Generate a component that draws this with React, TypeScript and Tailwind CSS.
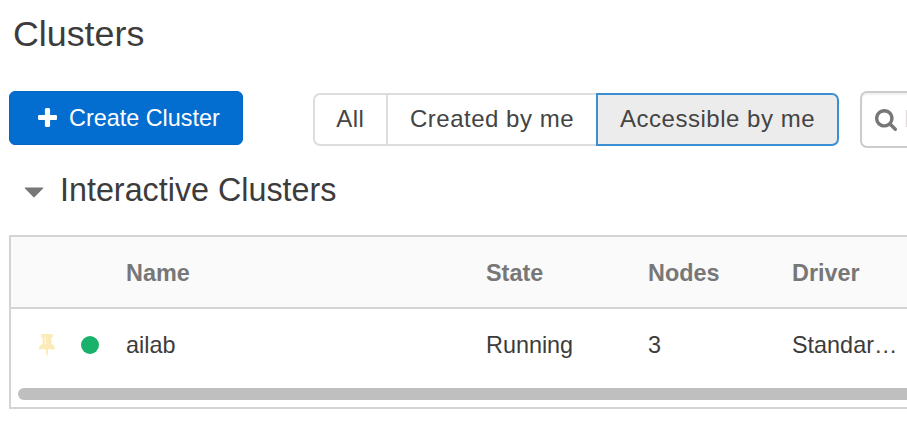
const plusPath =
  'M1600 736v192q0 40-28 68t-68 28h-416v416q0 40-28 68t-68 28h-192q-40 0-68-28t-28-68v-416h-416q-40 0-68-28t-28-68v-192q0-40 28-68t68-28h416v-416q0-40 28-68t68-28h192q40 0 68 28t28 68v416h416q40 0 68 28t28 68z';
const searchPath =
  'M1216 832q0-185-131.500-316.500t-316.500-131.500-316.500 131.500-131.500 316.500 131.500 316.500 316.500 131.500 316.500-131.500 131.500-316.500zm512 832q0 52-38 90t-90 38q-54 0-90-38l-343-342q-179 124-399 124-143 0-273.500-55.500t-225-150-150-225-55.500-273.500 55.500-273.500 150-225 225-150 273.500-55.500 273.500 55.500 225 150 150 225 55.500 273.500q0 220-124 399l343 343q37 37 37 90z';
const pinPath =
  'M800 864v-448q0-14-9-23t-23-9-23 9-9 23v448q0 14 9 23t23 9 23-9 9-23zm672 352q0 26-19 45t-45 19h-429l-51 483q-2 12-10.500 20.500t-20.500 8.500h-1q-27 0-32-27l-76-485h-404q-26 0-45-19t-19-45q0-123 78.500-221.500t177.500-98.500v-512q-52 0-90-38t-38-90 38-90 90-38h640q52 0 90 38t38 90-38 90-90 38v512q99 0 177.500 98.500t78.500 221.500z';

const columns = 'grid grid-cols-[115px_360px_162px_144px_1fr] items-center';

function Toolbar() {
  return (
    <div className="flex h-[58px] w-[1100px] items-start">
      <button className="flex h-[54px] w-[234px] items-center rounded-[6px] border border-[#0565c2] bg-[#036dd0] pl-[28px] text-white">
        <svg className="mr-[12px] mb-[2px] h-[19px] w-[19px] shrink-0" viewBox="192 128 1408 1408" fill="currentColor">
          <path d={plusPath} />
        </svg>
        <span className="pt-px text-[23.4px] whitespace-nowrap">Create Cluster</span>
      </button>
      <div className="mt-[2px] ml-[69.500px] flex h-[53px] text-[24px] whitespace-nowrap text-[#444]">
        <button className="w-[73.500px] rounded-l-[7px] border-2 border-r-0 border-[#ddd] pb-px tracking-[0.4px]">All</button>
        <button className="w-[210px] border-2 border-r-0 border-[#ddd] pb-px tracking-[0.52px]">Created by me</button>
        <button className="w-[243px] rounded-r-[7px] border-2 border-[#3a8fd4] bg-[#ececec] pb-px tracking-[0.52px]">
          Accessible by me
        </button>
      </div>
      <div className="ml-[21px] flex h-[57px] w-[200px] items-center rounded-[7px] border-2 border-[#ccc] pl-[13px] shadow-[inset_0_2px_2px_rgba(0,0,0,0.06)]">
        <svg className="mr-[7px] h-[22px] w-[22px] shrink-0" viewBox="64 128 1664 1664" fill="#777">
          <path d={searchPath} />
        </svg>
        <span className="text-[23.4px] text-[#ddd]">Filter</span>
      </div>
    </div>
  );
}

function ClusterTable() {
  return (
    <div className="h-[174px] w-[1100px] border-2 border-[#d4d4d4] text-[23.4px]">
      <div className={`${columns} h-[72px] border-b-2 border-[#d4d4d4] bg-[#fafafa] pt-[3px] font-bold text-[#777]`}>
        <span />
        <span>Name</span>
        <span>State</span>
        <span>Nodes</span>
        <span>Driver</span>
      </div>
      <div className={`${columns} h-[72px] pt-[2px] text-[#3c3c3c]`}>
        <div className="flex items-center pb-[2px] pl-[28px]">
          <svg className="h-[22px] w-[16px]" viewBox="320 128 1152 1664" preserveAspectRatio="none" fill="#faebb8">
            <path d={pinPath} />
          </svg>
          <span className="ml-[26px] h-[18px] w-[18px] rounded-full bg-[#19b16b]" />
        </div>
        <span>ailab</span>
        <span>Running</span>
        <span>3</span>
        <span>Standar…</span>
      </div>
      <div className="mt-[7px] ml-[7px] h-[12px] rounded-full bg-[#bfbfbf]" />
    </div>
  );
}

export default function App() {
  return (
    <main className="h-[423px] w-full overflow-hidden bg-white pl-[9px] font-['Liberation_Sans',Arial,sans-serif]">
      <h1 className="h-[91px] pt-[13px] pl-[4px] text-[35.8px] leading-[42px] text-[#3c3c3c]">Clusters</h1>
      <Toolbar />
      <div className="flex h-[86px] items-start pt-[23px] pl-[15px]">
        <svg className="mt-[15px] mr-[16px] h-[11px] w-[20px]" viewBox="0 0 20 11" fill="#777">
          <path d="M1 0.5h18q.7.3 0 1l-8.300 8.500q-.7.6-1.400 0L1 1.500q-.7-.7 0-1z" />
        </svg>
        <h2 className="text-[32.3px] leading-[37px] text-[#3c3c3c]">Interactive Clusters</h2>
      </div>
      <ClusterTable />
    </main>
  );
}
